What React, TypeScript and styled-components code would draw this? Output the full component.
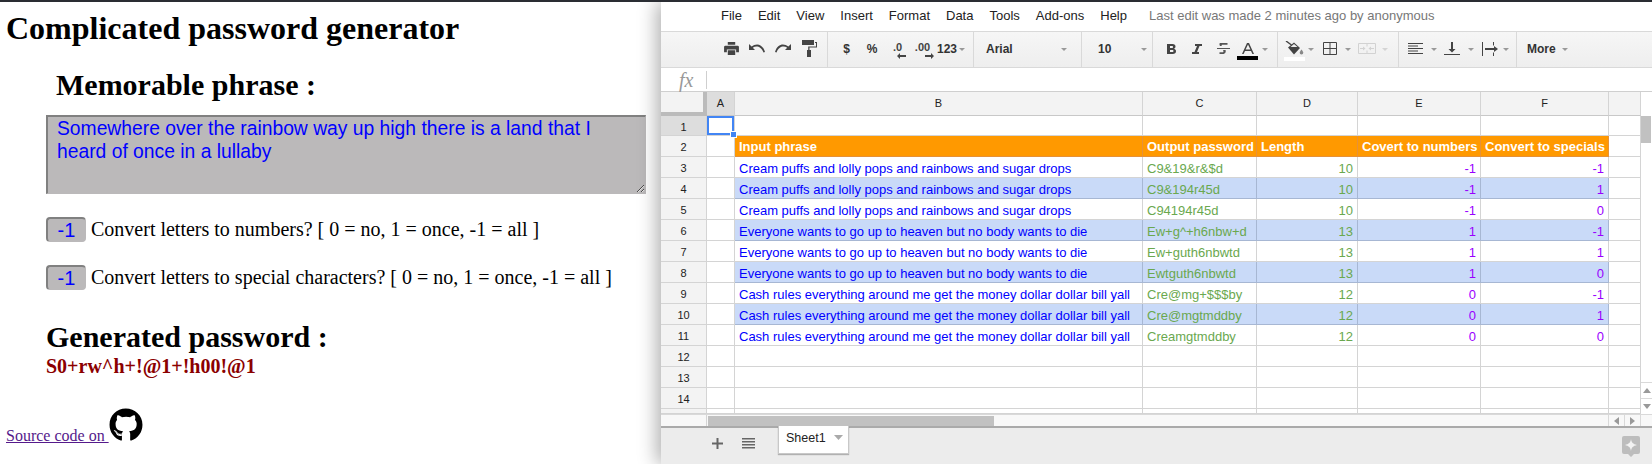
import { createGlobalStyle, styled } from "styled-components";
import { FaGithub } from "react-icons/fa";

const COLUMNS = "46px 28px 408px 114px 101px 123px 128px 32px";

const rows = [
  ["Cream puffs and lolly pops and rainbows and sugar drops", "C9&19&r&$d", "10", "-1", "-1"],
  ["Cream puffs and lolly pops and rainbows and sugar drops", "C9&194r45d", "10", "-1", "1"],
  ["Cream puffs and lolly pops and rainbows and sugar drops", "C94194r45d", "10", "-1", "0"],
  ["Everyone wants to go up to heaven but no body wants to die", "Ew+g^+h6nbw+d", "13", "1", "-1"],
  ["Everyone wants to go up to heaven but no body wants to die", "Ew+guth6nbwtd", "13", "1", "1"],
  ["Everyone wants to go up to heaven but no body wants to die", "Ewtguth6nbwtd", "13", "1", "0"],
  ["Cash rules everything around me get the money dollar dollar bill yall", "Cre@mg+$$$by", "12", "0", "-1"],
  ["Cash rules everything around me get the money dollar dollar bill yall", "Cre@mgtmddby", "12", "0", "1"],
  ["Cash rules everything around me get the money dollar dollar bill yall", "Creamgtmddby", "12", "0", "0"],
];

const menuItems = ["File", "Edit", "View", "Insert", "Format", "Data", "Tools", "Add-ons", "Help"];

function App() {
  return (
    <>
      <GlobalStyle />
      <Page>
        <Generator>
          <Title>Complicated password generator</Title>
          <PhraseHeading>Memorable phrase :</PhraseHeading>
          <Indented>
            <PhraseBox
              readOnly
              value="Somewhere over the rainbow way up high there is a land that I heard of once in a lullaby"
            />
            <OptionRow>
              <OptionInput readOnly value="-1" />
              <span>Convert letters to numbers? [ 0 = no, 1 = once, -1 = all ]</span>
            </OptionRow>
            <OptionRow>
              <OptionInput readOnly value="-1" />
              <span>Convert letters to special characters? [ 0 = no, 1 = once, -1 = all ]</span>
            </OptionRow>
            <ResultHeading>Generated password :</ResultHeading>
            <Password>S0+rw^h+!@1+!h00!@1</Password>
          </Indented>
          <SourceLine>
            <SourceLink href="#">Source code on </SourceLink>
            <FaGithub size={34} color="#000" />
          </SourceLine>
        </Generator>

        <Sheets>
          <MenuBar>
            <Menu>
              {menuItems.map((item) => (
                <span key={item}>{item}</span>
              ))}
            </Menu>
            <LastEdit>Last edit was made 2 minutes ago by anonymous</LastEdit>
          </MenuBar>

          <Toolbar>
            <ToolGroup $width={167} $pad={57}>
              <Tool $w={26}>
                <svg width="15" height="13" viewBox="0 0 16 14">
                  <path d="M4 0h8v3H4zM1.5 4h13A1.500 1.500 0 0 1 16 5.500V11h-3V8H3v3H0V5.500A1.500 1.500 0 0 1 1.500 4zM4 9h8v5H4z" fill="#444" />
                </svg>
              </Tool>
              <Tool $w={26}>
                <svg width="16" height="9" viewBox="0 0 16 9">
                  <path d="M0 0v6h6L3.800 3.800C7 1.400 12 2 14.500 8.500L16 8C13.500-.5 7-1 2.600 2.600z" fill="#444" />
                </svg>
              </Tool>
              <Tool $w={26}>
                <svg width="16" height="9" viewBox="0 0 16 9">
                  <path d="M16 0v6h-6l2.200-2.200C9 1.400 4 2 1.500 8.500L0 8C2.500-.5 9-1 13.400 2.600z" fill="#444" />
                </svg>
              </Tool>
              <Tool $w={26}>
                <svg width="15" height="17" viewBox="0 0 15 17">
                  <path d="M0 0h12v5H0zM13 2h2v5.500H7.500V10H9v7H5v-7h1.200V6.500H14V3h-1z" fill="#444" />
                </svg>
              </Tool>
            </ToolGroup>

            <ToolGroup $width={146} $pad={6}>
              <Tool $w={25}><BoldGlyph>$</BoldGlyph></Tool>
              <Tool $w={26}><BoldGlyph>%</BoldGlyph></Tool>
              <Tool $w={25}>
                <DecimalGlyph>
                  .0
                  <svg width="9" height="6" viewBox="0 0 9 6">
                    <path d="M3 0v2h6v2H3v2L0 3z" fill="#444" />
                  </svg>
                </DecimalGlyph>
              </Tool>
              <Tool $w={25}>
                <DecimalGlyph>
                  .00
                  <svg width="9" height="6" viewBox="0 0 9 6">
                    <path d="M6 0v2H0v2h6v2l3-3z" fill="#444" />
                  </svg>
                </DecimalGlyph>
              </Tool>
              <Tool $w={24}><BoldGlyph>123</BoldGlyph></Tool>
              <Caret />
            </ToolGroup>

            <ToolGroup $width={108} $pad={12} $between>
              <BoldGlyph>Arial</BoldGlyph>
              <Caret $right={14} />
            </ToolGroup>

            <ToolGroup $width={71} $pad={16} $between>
              <BoldGlyph>10</BoldGlyph>
              <Caret $right={5} />
            </ToolGroup>

            <ToolGroup $width={125} $pad={5}>
              <Tool $w={26}>
                <svg width="9" height="10" viewBox="0 0 9 10">
                  <path d="M0 0h5.500C7.500 0 8.500 1.100 8.500 2.600c0 1-.5 1.800-1.400 2.200 1.200.4 1.900 1.300 1.900 2.400C9 9 7.800 10 5.700 10H0zM3 2v2h2c.7 0 1-.4 1-1s-.3-1-1-1zm0 4v2h2.300c.8 0 1.200-.4 1.200-1s-.4-1-1.200-1z" fill="#444" />
                </svg>
              </Tool>
              <Tool $w={26}>
                <svg width="10" height="10" viewBox="0 0 10 10">
                  <path d="M3 0h7v2H7.500L5 8h2v2H0V8h2.500L5 2H3z" fill="#444" />
                </svg>
              </Tool>
              <Tool $w={27}>
                <svg width="13" height="11" viewBox="0 0 13 11">
                  <path d="M0 5h13v1H0zM3 0h7.500v1.800H5c-.5 0-.6.9 0 1.200h-2C2.200 2 2.400 0 3 0zM6 7h2.500c.8 1.700-.3 4-2.500 4H2.500V9.200H6c.6 0 .6-1.400 0-2.200z" fill="#555" />
                </svg>
              </Tool>
              <ColorTool $gap={4}>
                <svg width="12" height="11" viewBox="0 0 12 11">
                  <path d="M5 0h2l5 11h-1.600L9 8H3l-1.400 3H0zm-1.400 6.500h4.800L6 1.600z" fill="#444" />
                </svg>
                <ColorBar $color="#000" />
              </ColorTool>
              <Caret />
            </ToolGroup>

            <ToolGroup $width={121} $pad={6}>
              <ColorTool $gap={3}>
                <svg width="19" height="14" viewBox="0 0 19 14">
                  <path d="M1 0l5.500 4" fill="none" stroke="#444" strokeWidth="1.400" />
                  <path d="M3 6.500 9 1.500l6 5.500-6 6.500z" fill="#444" />
                  <path d="M5.500 6 9 3l3.500 3z" fill="#eee" />
                  <path d="M16.500 8.500c.8 1.100 1.800 2.200 1.800 3.300a1.800 1.800 0 0 1-3.600 0c0-1.100 1-2.200 1.800-3.300z" fill="#888" />
                </svg>
                <ColorBar $color="#fff" />
              </ColorTool>
              <Caret />
              <Tool $w={31}>
                <svg width="14" height="13" viewBox="0 0 14 13">
                  <path d="M.5.500h13v12H.5zM7 .500v12M.5 6.500h13" fill="none" stroke="#444" />
                </svg>
              </Tool>
              <Caret />
              <Tool $w={31}>
                <svg width="18" height="11" viewBox="0 0 18 11">
                  <path d="M.5.500h17v10H.5zM9 .500v3M9 7.500v3M2 5.500h4M16 5.500h-4" fill="none" stroke="#d2d2d2" />
                  <path d="M7.500 5.500 5 3.500v4zM10.500 5.500 13 3.500v4z" fill="#d2d2d2" />
                </svg>
              </Tool>
              <Caret $light />
            </ToolGroup>

            <ToolGroup $width={118} $pad={9}>
              <Tool $w={15}>
                <svg width="15" height="11" viewBox="0 0 15 11">
                  <path d="M0 .5h15M0 3h10M0 5.500h15M0 8h10M0 10.500h15" fill="none" stroke="#444" />
                </svg>
              </Tool>
              <Spaced $w={21}><Caret /></Spaced>
              <Tool $w={16}>
                <svg width="16" height="13" viewBox="0 0 16 13">
                  <path d="M7 0h2v7h2.500L8 10.500 4.500 7H7zM0 12h16v1H0z" fill="#444" />
                </svg>
              </Tool>
              <Spaced $w={21}><Caret /></Spaced>
              <Tool $w={17}>
                <svg width="16" height="14" viewBox="0 0 16 14">
                  <path d="M.5 0v14" stroke="#444" fill="none" />
                  <path d="M3 6h9v2H3z" fill="#444" />
                  <path d="M12 4l4 3-4 3z" fill="#444" />
                  <path d="M11.500 0v3.500M11.500 10.500V14" stroke="#444" fill="none" />
                </svg>
              </Tool>
              <Spaced $w={16}><Caret /></Spaced>
            </ToolGroup>

            <MoreGroup>
              <BoldGlyph>More</BoldGlyph>
              <Caret />
            </MoreGroup>
          </Toolbar>

          <FormulaBar>
            <FxLabel>fx</FxLabel>
          </FormulaBar>

          <SheetGrid>
            <HeaderRow>
              <Corner />
              {["A", "B", "C", "D", "E", "F", ""].map((letter, i) => (
                <ColumnHead key={i} $active={letter === "A"}>{letter}</ColumnHead>
              ))}
            </HeaderRow>

            <FirstRow>
              <RowHead $active>1</RowHead>
              <Cell $selected>
                <FillHandle />
              </Cell>
              <Cell /><Cell /><Cell /><Cell /><Cell /><Cell $end />
            </FirstRow>

            <Row>
              <RowHead>2</RowHead>
              <Cell />
              <HeadCell>Input phrase</HeadCell>
              <HeadCell>Output password</HeadCell>
              <HeadCell>Length</HeadCell>
              <HeadCell>Covert to numbers</HeadCell>
              <HeadCell>Convert to specials</HeadCell>
              <Cell $end />
            </Row>

            {rows.map((row, i) => {
              const banded = i % 2 === 1;
              return (
                <Row key={i}>
                  <RowHead>{i + 3}</RowHead>
                  <Cell />
                  <Cell $band={banded} $color="#0000ff">{row[0]}</Cell>
                  <Cell $band={banded} $color="#6aa84f">{row[1]}</Cell>
                  <Cell $band={banded} $color="#6aa84f" $num>{row[2]}</Cell>
                  <Cell $band={banded} $color="#9900ff" $num>{row[3]}</Cell>
                  <Cell $band={banded} $color="#9900ff" $num>{row[4]}</Cell>
                  <Cell $end />
                </Row>
              );
            })}

            {[12, 13, 14].map((n) => (
              <Row key={n}>
                <RowHead>{n}</RowHead>
                <Cell /><Cell /><Cell /><Cell /><Cell /><Cell /><Cell $end />
              </Row>
            ))}

            <PartialRow>
              <RowHead />
              <Cell /><Cell /><Cell /><Cell /><Cell /><Cell /><Cell $end />
            </PartialRow>

            <VerticalScroll>
              <VerticalThumb />
              <ScrollButtons>
                <ScrollButton>
                  <svg width="8" height="5" viewBox="0 0 8 5"><path d="M4 0l4 5H0z" fill="#999" /></svg>
                </ScrollButton>
                <ScrollButton>
                  <svg width="8" height="5" viewBox="0 0 8 5"><path d="M4 5l4-5H0z" fill="#999" /></svg>
                </ScrollButton>
              </ScrollButtons>
            </VerticalScroll>
          </SheetGrid>

          <HorizontalScroll>
            <ScrollGutter />
            <ScrollTrack>
              <HorizontalThumb />
            </ScrollTrack>
            <ScrollArrow>
              <svg width="5" height="8" viewBox="0 0 5 8"><path d="M0 4l5 4V0z" fill="#999" /></svg>
            </ScrollArrow>
            <ScrollArrow>
              <svg width="5" height="8" viewBox="0 0 5 8"><path d="M5 4L0 8V0z" fill="#999" /></svg>
            </ScrollArrow>
            <ScrollCorner />
          </HorizontalScroll>

          <TabBar>
            <TabIcon>
              <svg width="11" height="11" viewBox="0 0 11 11">
                <path d="M4.500 0h2v4.500H11v2H6.500V11h-2V6.500H0v-2h4.500z" fill="#666" />
              </svg>
            </TabIcon>
            <TabIcon>
              <svg width="13" height="11" viewBox="0 0 13 11">
                <path d="M0 0h13v1.500H0zM0 3h13v1.500H0zM0 6h13v1.500H0zM0 9h13v1.500H0z" fill="#666" />
              </svg>
            </TabIcon>
            <SheetTab>
              Sheet1
              <svg width="9" height="5" viewBox="0 0 9 5"><path d="M0 0h9L4.500 5z" fill="#aaa" /></svg>
            </SheetTab>
            <ExploreButton>
              <svg width="18" height="21" viewBox="0 0 18 21">
                <path d="M2 0h14a2 2 0 0 1 2 2v14a2 2 0 0 1-2 2h-4l-3 3-3-3H2a2 2 0 0 1-2-2V2a2 2 0 0 1 2-2z" fill="#bdbdbd" />
                <path d="M9 3c.5 3.500 2 5 6 6-4 1-5.500 2.500-6 6-.5-3.500-2-5-6-6 4-1 5.500-2.500 6-6z" fill="#f3f3f3" />
              </svg>
            </ExploreButton>
          </TabBar>
        </Sheets>
      </Page>
    </>
  );
}

export default App;

const GlobalStyle = createGlobalStyle`
  html, body {
    margin: 0;
    padding: 0;
    background: #fff;
    overflow: hidden;
  }
`;

const Page = styled.div`
  display: flex;
  width: 1652px;
  height: 464px;
  box-sizing: border-box;
  border-top: 2px solid #2a2d33;
  overflow: hidden;
`;

const Generator = styled.div`
  width: 661px;
  flex-shrink: 0;
  box-sizing: border-box;
  padding-left: 6px;
  font-family: "Liberation Serif", serif;
  color: #000;
`;

const Title = styled.h1`
  margin: 9px 0 0;
  font-size: 32px;
  line-height: 34px;
  font-weight: bold;
`;

const PhraseHeading = styled.h2`
  margin: 24px 0 0 50px;
  font-size: 30px;
  line-height: 32px;
  font-weight: bold;
`;

const Indented = styled.div`
  margin: 14px 0 0 40px;
  width: 600px;
`;

const PhraseBox = styled.textarea`
  display: block;
  width: 600px;
  height: 79px;
  box-sizing: border-box;
  padding: 0 9px 1px;
  background: #bbb9ba;
  border-style: solid;
  border-width: 2px 1px 1px 2px;
  border-color: #808080 #bbb9ba #bbb9ba #808080;
  border-radius: 0;
  font-family: "Liberation Sans", Arial, sans-serif;
  font-size: 19.3px;
  line-height: 23px;
  color: #0000ff;
  outline: none;
`;

const OptionRow = styled.div`
  display: flex;
  align-items: center;
  gap: 5px;
  height: 25px;
  margin-top: 23px;
  font-size: 20px;
  white-space: nowrap;
`;

const OptionInput = styled.input`
  width: 40px;
  height: 25px;
  box-sizing: border-box;
  padding: 0;
  border-style: solid;
  border-width: 2px 1px 1px 2px;
  border-color: #808080 #bbb9ba #bbb9ba #808080;
  border-radius: 4px;
  background: #bbb9ba;
  font-family: "Liberation Sans", Arial, sans-serif;
  font-size: 20px;
  color: #0000ff;
  text-align: center;
  outline: none;
`;

const ResultHeading = styled.h2`
  margin: 31px 0 0;
  font-size: 30px;
  line-height: 32px;
  font-weight: bold;
`;

const Password = styled.div`
  margin-top: 1px;
  font-size: 20px;
  line-height: 24px;
  font-weight: bold;
  color: #8b0000;
`;

const SourceLine = styled.div`
  display: flex;
  align-items: flex-end;
  margin-top: 30px;
  font-size: 16px;
`;

const SourceLink = styled.a`
  color: #551a8b;
  white-space: pre;
  line-height: 18px;
  margin-bottom: -3px;
`;

const Sheets = styled.div`
  position: relative;
  display: flex;
  flex-direction: column;
  width: 991px;
  flex-shrink: 0;
  background: #fff;
  box-shadow: -4px 0 18px rgba(0, 0, 0, 0.32);
  font-family: "Liberation Sans", Arial, sans-serif;
`;

const MenuBar = styled.div`
  display: flex;
  align-items: center;
  height: 30px;
  padding: 0 0 2px 60px;
  box-sizing: border-box;
  font-size: 13px;
  color: #222;
  border-bottom: 1px solid #d9d9d9;
`;

const Menu = styled.div`
  display: flex;
  gap: 16px;
`;

const LastEdit = styled.span`
  margin-left: 22px;
  color: #777;
`;

const Toolbar = styled.div`
  display: flex;
  height: 36px;
  box-sizing: border-box;
  border-bottom: 1px solid #d9d9d9;
  background: linear-gradient(#f6f6f6, #eeeeee);
`;

const ToolGroup = styled.div<{ $width: number; $pad: number; $between?: boolean }>`
  display: flex;
  align-items: center;
  justify-content: ${(p) => (p.$between ? "space-between" : "flex-start")};
  width: ${(p) => p.$width}px;
  padding-left: ${(p) => p.$pad}px;
  padding-bottom: 2px;
  box-sizing: border-box;
  border-right: 1px solid #d9d9d9;
`;

const MoreGroup = styled.div`
  display: flex;
  align-items: center;
  gap: 6px;
  padding: 0 0 2px 10px;
`;

const Tool = styled.div<{ $w: number }>`
  display: flex;
  align-items: center;
  justify-content: center;
  width: ${(p) => p.$w}px;
  flex-shrink: 0;
`;

const Spaced = styled.div<{ $w: number }>`
  display: flex;
  justify-content: center;
  width: ${(p) => p.$w}px;
  flex-shrink: 0;
`;

const BoldGlyph = styled.span`
  font-size: 12px;
  font-weight: bold;
  color: #333;
`;

const DecimalGlyph = styled.span`
  position: relative;
  font-size: 11px;
  font-weight: bold;
  color: #444;
  top: -2px;

  svg {
    position: absolute;
    right: -4px;
    top: 12px;
  }
`;

const Caret = styled.span<{ $right?: number; $light?: boolean }>`
  width: 0;
  height: 0;
  border-style: solid;
  border-width: 3px 3px 0;
  border-color: ${(p) => (p.$light ? "#d4d4d4" : "#999")} transparent transparent;
  margin-top: 1px;
  margin-right: ${(p) => p.$right ?? 0}px;
  flex-shrink: 0;
`;

const ColorTool = styled.div<{ $gap: number }>`
  display: flex;
  flex-direction: column;
  align-items: center;
  justify-content: flex-end;
  gap: 2px;
  width: 21px;
  margin: 5px ${(p) => p.$gap}px 0 0;
  flex-shrink: 0;

  svg {
    display: block;
  }
`;

const ColorBar = styled.div<{ $color: string }>`
  width: 21px;
  height: 4px;
  background: ${(p) => p.$color};
`;

const FormulaBar = styled.div`
  display: flex;
  align-items: center;
  height: 24px;
  padding-left: 18px;
  box-sizing: border-box;
  border-bottom: 1px solid #cfcfcf;
`;

const FxLabel = styled.span`
  width: 27px;
  height: 18px;
  border-right: 1px solid #cfcfcf;
  font-family: "Liberation Serif", serif;
  font-style: italic;
  font-size: 20px;
  line-height: 19px;
  color: #999;
`;

const SheetGrid = styled.div`
  position: relative;
  display: flex;
  flex-direction: column;
  font-size: 13px;
`;

const Row = styled.div`
  display: grid;
  grid-template-columns: ${COLUMNS};
  height: 21px;
`;

const HeaderRow = styled(Row)`
  height: 24px;
`;

const FirstRow = styled(Row)`
  height: 20px;
`;

const PartialRow = styled(Row)`
  height: 5px;
  overflow: hidden;
`;

const Corner = styled.div`
  box-sizing: border-box;
  background: #f3f3f3;
  border-right: 4px solid #bbb;
  border-bottom: 4px solid #bbb;
`;

const ColumnHead = styled.div<{ $active?: boolean }>`
  display: flex;
  align-items: center;
  justify-content: center;
  box-sizing: border-box;
  padding-bottom: 2px;
  background: ${(p) => (p.$active ? "#dddddd" : "#f3f3f3")};
  border-right: 1px solid #d4d4d4;
  border-bottom: 1px solid #c8c8c8;
  font-size: 11px;
  color: #222;
`;

const RowHead = styled.div<{ $active?: boolean }>`
  display: flex;
  align-items: center;
  justify-content: center;
  box-sizing: border-box;
  padding-top: 2px;
  background: ${(p) => (p.$active ? "#dddddd" : "#f3f3f3")};
  border-right: 1px solid #d4d4d4;
  border-bottom: 1px solid #d4d4d4;
  font-size: 11px;
  color: #222;
`;

const Cell = styled.div<{
  $band?: boolean;
  $color?: string;
  $num?: boolean;
  $selected?: boolean;
  $end?: boolean;
}>`
  position: relative;
  box-sizing: border-box;
  padding: 0 4px;
  line-height: 23px;
  white-space: nowrap;
  overflow: ${(p) => (p.$selected ? "visible" : "hidden")};
  color: ${(p) => p.$color ?? "#000"};
  text-align: ${(p) => (p.$num ? "right" : "left")};
  background: ${(p) => (p.$band ? "#c9daf8" : "#fff")};
  border-right: 1px solid ${(p) => (p.$band ? "#a7b7d3" : "#d4d4d4")};
  border-bottom: 1px solid ${(p) => (p.$band ? "#a7b7d3" : "#d4d4d4")};
  ${(p) => p.$selected && "box-shadow: inset 0 0 0 2px #4285f4;"}
  ${(p) => p.$end && "border-right: none;"}
`;

const FillHandle = styled.span`
  position: absolute;
  right: -3px;
  bottom: -3px;
  width: 5px;
  height: 5px;
  background: #4285f4;
  border: 1px solid #fff;
  z-index: 2;
`;

const HeadCell = styled.div`
  box-sizing: border-box;
  padding: 0 4px;
  line-height: 21px;
  white-space: nowrap;
  overflow: hidden;
  font-weight: bold;
  color: #fff;
  background: #ff9900;
  border-top: 1px solid #e69138;
  border-right: 1px solid #e69138;
  border-bottom: 1px solid #e69138;
  margin-top: -1px;
  height: 22px;
`;

const VerticalScroll = styled.div`
  position: absolute;
  top: 24px;
  right: 0;
  bottom: 0;
  width: 12px;
  box-sizing: border-box;
  display: flex;
  flex-direction: column;
  justify-content: space-between;
  background: #fff;
  border-left: 1px solid #d4d4d4;
`;

const VerticalThumb = styled.div`
  height: 27px;
  margin: 0 1px 0 0;
  background: #c1c1c1;
`;

const ScrollButtons = styled.div`
  display: flex;
  flex-direction: column;
`;

const ScrollButton = styled.div`
  display: flex;
  align-items: center;
  justify-content: center;
  height: 16px;
  box-sizing: border-box;
  border-top: 1px solid #d9d9d9;
`;

const HorizontalScroll = styled.div`
  display: flex;
  height: 11px;
  background: #f8f8f8;
  border-top: 1px solid #d9d9d9;
  border-bottom: 2px solid #aaa;
`;

const ScrollGutter = styled.div`
  width: 46px;
  box-sizing: border-box;
  border-right: 1px solid #d4d4d4;
`;

const ScrollTrack = styled.div`
  width: 901px;
  padding: 1px 0 0 1px;
  box-sizing: border-box;
`;

const HorizontalThumb = styled.div`
  width: 286px;
  height: 10px;
  background: #c1c1c1;
`;

const ScrollArrow = styled.div`
  display: flex;
  align-items: center;
  justify-content: center;
  width: 16px;
  box-sizing: border-box;
  border-left: 1px solid #d9d9d9;
`;

const ScrollCorner = styled.div`
  flex: 1;
  border-left: 1px solid #d9d9d9;
`;

const TabBar = styled.div`
  flex: 1;
  display: flex;
  align-items: flex-start;
  background: #ececec;
`;

const TabIcon = styled.div`
  display: flex;
  align-items: center;
  justify-content: center;
  width: 31px;
  height: 31px;

  &:first-child {
    margin-left: 41px;
  }
`;

const SheetTab = styled.div`
  display: flex;
  align-items: center;
  gap: 8px;
  margin: -2px 0 0 14px;
  height: 28px;
  width: 71px;
  padding: 0 0 4px 7px;
  box-sizing: border-box;
  background: #fff;
  border: 1px solid #c8c8c8;
  border-top: none;
  box-shadow: 0 1px 1px rgba(0, 0, 0, 0.25);
  font-size: 12.5px;
  color: #222;
`;

const ExploreButton = styled.div`
  margin: 8px 12px 0 auto;
  height: 21px;
`;
